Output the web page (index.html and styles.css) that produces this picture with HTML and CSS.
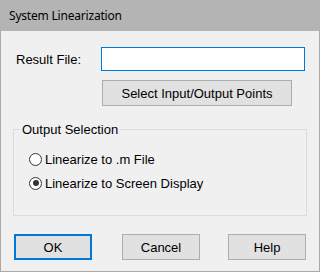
FILE: index.html
```html
<!DOCTYPE html>
<html>
<head>
<meta charset="utf-8">
<link rel="stylesheet" href="styles.css">
</head>
<body>
<div class="window">
  <div class="titlebar">System Linearization</div>
  <div class="content">
    <div class="row-file">
      <label class="file-label">Result File:</label>
      <div class="file-input"></div>
    </div>
    <button class="btn btn-select">Select Input/Output Points</button>
    <fieldset class="group">
      <legend class="group-legend">Output Selection</legend>
      <div class="radio-row"><span class="radio"></span><span class="radio-text">Linearize to .m File</span></div>
      <div class="radio-row"><span class="radio checked"></span><span class="radio-text">Linearize to Screen Display</span></div>
    </fieldset>
    <div class="actions">
      <button class="btn btn-action btn-default">OK</button>
      <button class="btn btn-action btn-cancel">Cancel</button>
      <button class="btn btn-action btn-help">Help</button>
    </div>
  </div>
</div>
</body>
</html>
```

FILE: styles.css
```css
* { box-sizing: border-box; }
html, body { margin: 0; padding: 0; }
body {
  width: 320px;
  height: 272px;
  font-family: "Liberation Sans", Arial, sans-serif;
  font-size: 13px;
  color: #000;
  background: #f0f0f0;
}
.window {
  width: 320px;
  height: 272px;
  display: flex;
  flex-direction: column;
}
.titlebar {
  height: 31px;
  flex: none;
  background: #b4b4b4;
  font-family: "Noto Sans", "Open Sans", sans-serif;
  font-size: 12px;
  letter-spacing: -0.2px;
  line-height: 31px;
  padding-left: 9px;
  color: #000;
}
.content {
  flex: 1;
  background: #f0f0f0;
  border: 1px solid #a9a9a9;
  border-top: 0;
  display: flex;
  flex-direction: column;
  align-items: flex-start;
}
.row-file {
  display: flex;
  align-items: center;
  margin-top: 16px;
}
.file-label {
  width: 85px;
  margin-left: 15px;
  line-height: 15px;
  padding-top: 1px;
}
.file-input {
  width: 204px;
  height: 24px;
  background: #fff;
  border: 1px solid #0078d7;
}
.btn {
  font-family: "Liberation Sans", Arial, sans-serif;
  font-size: 13px;
  color: #000;
  background: #e1e1e1;
  border: 1px solid #adadad;
  padding: 0;
  margin: 0;
  line-height: 15px;
}
.btn-select {
  margin-left: 101px;
  margin-top: 9px;
  width: 190px;
  height: 26px;
}
.group {
  margin: 16px 0 0 12px;
  width: 294px;
  height: 94px;
  border: 1px solid #dcdcdc;
  padding: 10px 0 0 6px;
  min-inline-size: 0;
}
.group-legend {
  padding: 0 2px;
  margin-left: 0;
  line-height: 15px;
  height: 15px;
}
.radio-row {
  display: flex;
  align-items: center;
  height: 24px;
  margin-left: 9px;
}
.radio {
  width: 13px;
  height: 13px;
  border: 1px solid #333;
  border-radius: 50%;
  background: #fff;
  margin-right: 3px;
  display: flex;
  align-items: center;
  justify-content: center;
  flex: none;
}
.radio.checked::after {
  content: "";
  width: 6px;
  height: 6px;
  border-radius: 50%;
  background: #333;
}
.radio-text {
  line-height: 15px;
}
.actions {
  display: flex;
  margin-top: 18px;
}
.btn-action {
  width: 78px;
  height: 26px;
}
.btn-default {
  margin-left: 13px;
  border: 2px solid #0078d7;
}
.btn-cancel {
  margin-left: 30px;
}
.btn-help {
  margin-left: 28px;
}
```
